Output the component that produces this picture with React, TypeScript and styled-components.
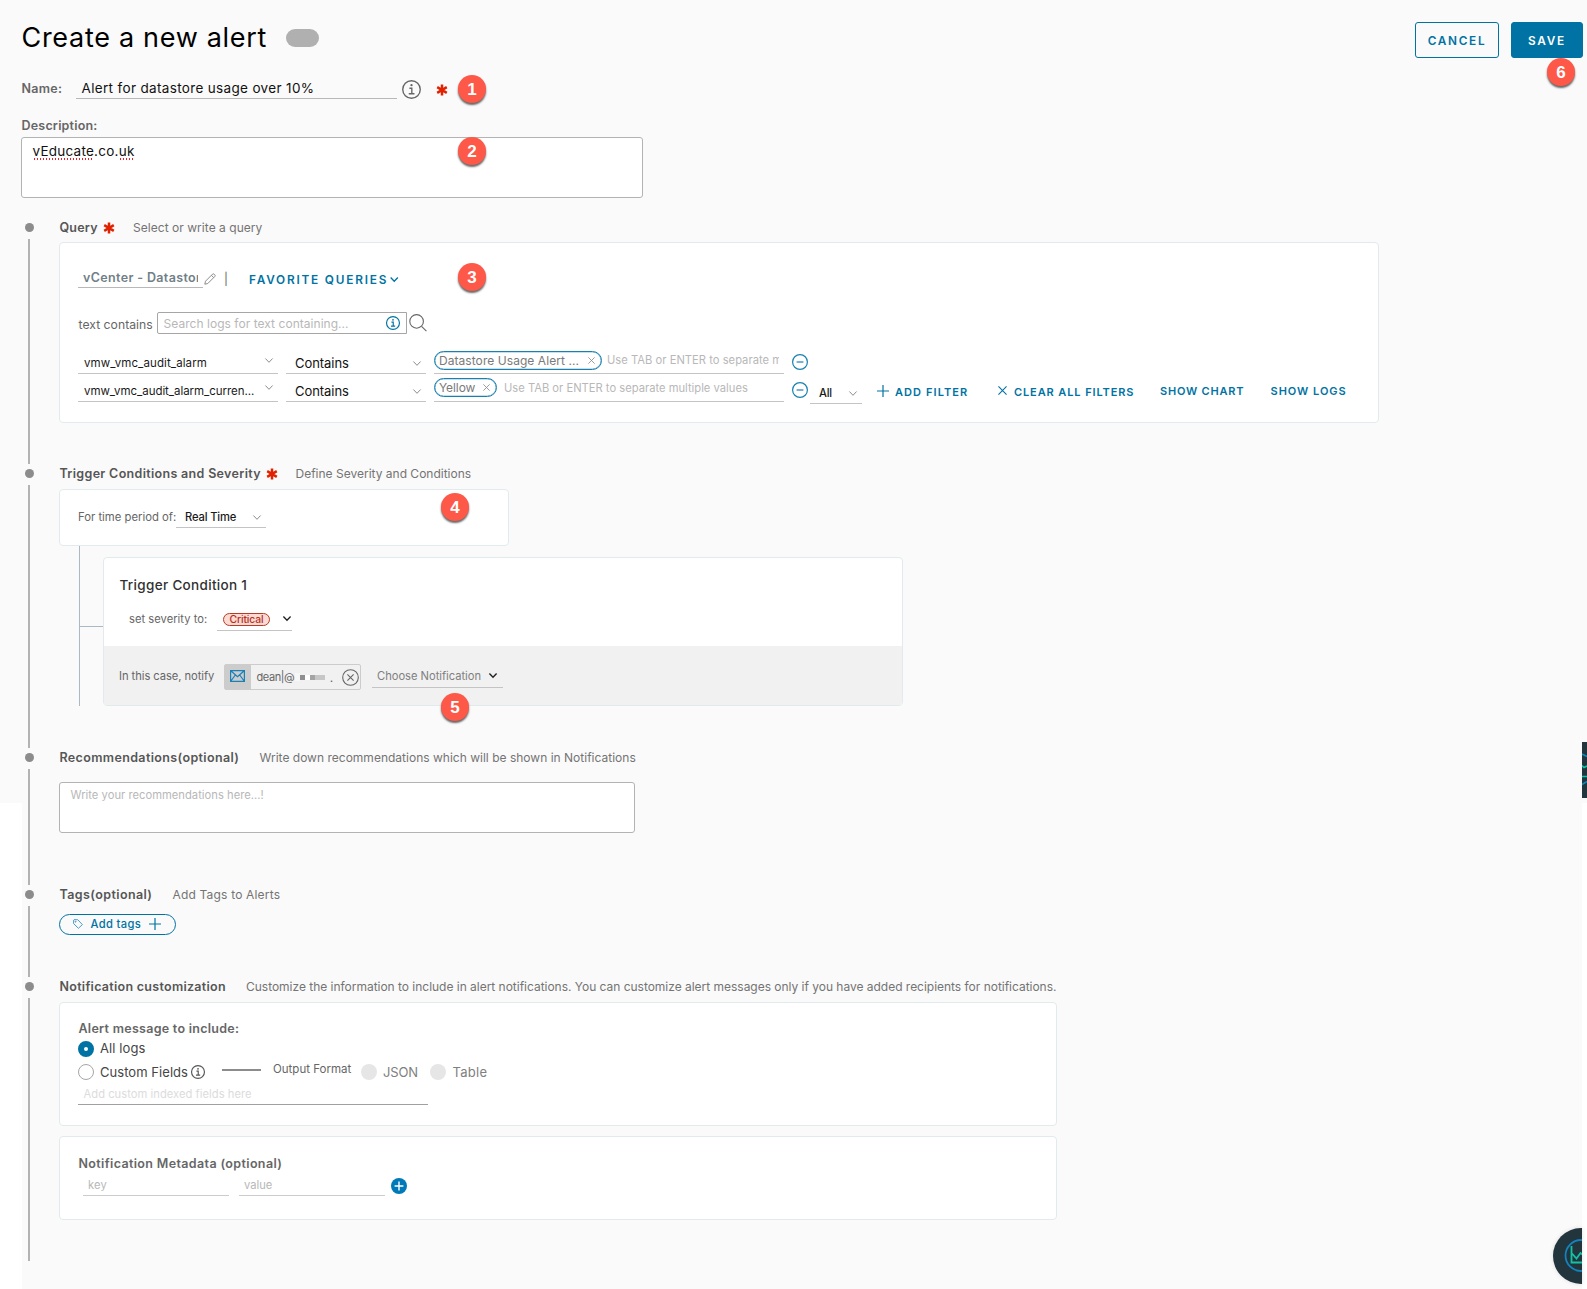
import React from 'react';
import styled, { createGlobalStyle } from 'styled-components';

const BLUE = '#0072a3';

const GlobalStyle = createGlobalStyle`
  * { box-sizing: border-box; }
  body { margin: 0; background: #fafafa; font-family: Inter, "Liberation Sans", sans-serif; }
  svg { display: block; flex: none; overflow: visible; }
`;

const Page = styled.main`
  position: relative;
  width: 1587px;
  height: 1289px;
  overflow: hidden;
  background: #fafafa;
  display: flex;
  flex-direction: column;
`;

const Gutter = styled.div<{ $side: 'left' | 'right'; $w: number }>`
  position: absolute;
  top: 803px;
  bottom: 0;
  ${(p) => p.$side}: 0;
  width: ${(p) => p.$w}px;
  background: #fff;
`;

interface TextProps {
  $size?: number;
  $weight?: number;
  $color?: string;
  $ls?: number;
  $w?: number;
  $ml?: number;
  $mt?: number;
}

const Text = styled.span<TextProps>`
  flex: none;
  font-size: ${(p) => p.$size ?? 12}px;
  font-weight: ${(p) => p.$weight ?? 400};
  color: ${(p) => p.$color ?? '#666'};
  letter-spacing: ${(p) => p.$ls ?? 0}px;
  line-height: 17px;
  white-space: nowrap;
  ${(p) => p.$w !== undefined && `width: ${p.$w}px;`}
  margin-left: ${(p) => p.$ml ?? 0}px;
  margin-top: ${(p) => p.$mt ?? 0}px;
`;

const Slot = styled.span<{ $ml?: number; $mt?: number }>`
  display: flex;
  flex: none;
  margin-left: ${(p) => p.$ml ?? 0}px;
  margin-top: ${(p) => p.$mt ?? 0}px;
`;

/* ---------- header ---------- */

const Header = styled.header`
  display: flex;
  align-items: center;
  height: 74px;
  padding: 0 4px 0 21.5px;
`;

const Title = styled.h1`
  margin: 2px 0 0;
  width: 264.5px;
  font-size: 27px;
  font-weight: 400;
  letter-spacing: 0.7px;
  line-height: 34px;
  color: #000;
  white-space: nowrap;
`;

const Toggle = styled.span`
  width: 33px;
  height: 18px;
  margin-top: 2px;
  border-radius: 9px;
  background: #b0b0b0;
`;

const Actions = styled.div`
  display: flex;
  gap: 12px;
  margin: 6px 0 0 auto;
`;

const Button = styled.button<{ $solid?: boolean }>`
  width: ${(p) => (p.$solid ? 72 : 84)}px;
  height: 36px;
  padding: 1px 0 0;
  border: 1px solid ${BLUE};
  border-radius: 3px;
  background: ${(p) => (p.$solid ? BLUE : 'transparent')};
  color: ${(p) => (p.$solid ? '#fff' : BLUE)};
  font: 600 11.8px Inter, sans-serif;
  letter-spacing: 1.7px;
`;

const FormRow = styled.div<{ $h: number; $mt?: number }>`
  display: flex;
  align-items: center;
  height: ${(p) => p.$h}px;
  margin-top: ${(p) => p.$mt ?? 0}px;
  padding-left: 21px;
`;

const Field = styled.div<{ $w: number; $h?: number; $pl?: number; $ml?: number; $mt?: number; $line?: string; $thick?: number }>`
  display: flex;
  align-items: center;
  flex: none;
  overflow: hidden;
  width: ${(p) => p.$w}px;
  height: ${(p) => p.$h ?? 21}px;
  padding-left: ${(p) => p.$pl ?? 5}px;
  margin-left: ${(p) => p.$ml ?? 0}px;
  margin-top: ${(p) => p.$mt ?? 0}px;
  border-bottom: ${(p) => p.$thick ?? 1}px solid ${(p) => p.$line ?? '#b8b8b8'};
`;

const TextArea = styled.div<{ $w: number; $h: number; $pt?: number }>`
  width: ${(p) => p.$w}px;
  height: ${(p) => p.$h}px;
  padding: ${(p) => p.$pt ?? 4}px 10.5px;
  border: 1px solid #b3b3b3;
  border-radius: 3px;
  background: #fff;
  display: flex;
  align-items: flex-start;
`;

const Misspelled = styled.span`
  padding-bottom: 1px;
  background: radial-gradient(circle, #e8202a 0.9px, transparent 1.1px) left bottom / 3px 2.4px repeat-x;
`;

/* ---------- timeline ---------- */

const Timeline = styled.div`
  display: flex;
  flex-direction: column;
  margin: 25px 0 0 21px;
`;

const Step = styled.section<{ $h: number }>`
  display: flex;
  height: ${(p) => p.$h}px;
`;

const Rail = styled.div`
  display: flex;
  flex-direction: column;
  align-items: center;
  width: 16px;
  margin-right: 22px;
  &::before {
    content: '';
    width: 9px;
    height: 9px;
    border-radius: 50%;
    background: #8c8c8c;
  }
  &::after {
    content: '';
    flex: 1;
    width: 2px;
    margin: 7px 0 5px;
    background: #b3b3b3;
  }
`;

const Body = styled.div``;

const Heading = styled.div<{ $gap: number }>`
  display: flex;
  align-items: center;
  height: 8px;
  margin-bottom: ${(p) => p.$gap}px;
`;

const Card = styled.div<{ $w: number; $h: number; $pt?: number; $mt?: number }>`
  width: ${(p) => p.$w}px;
  height: ${(p) => p.$h}px;
  padding: ${(p) => p.$pt ?? 0}px 0 0 18px;
  margin-top: ${(p) => p.$mt ?? 0}px;
  border: 1px solid #e1ebed;
  border-radius: 4px;
  background: #fff;
`;

const Row = styled.div<{ $h: number; $mt?: number; $top?: boolean }>`
  display: flex;
  align-items: ${(p) => (p.$top ? 'flex-start' : 'center')};
  height: ${(p) => p.$h}px;
  margin-top: ${(p) => p.$mt ?? 0}px;
`;

const SearchBox = styled.div`
  display: flex;
  align-items: center;
  width: 250px;
  height: 22px;
  padding-left: 5.5px;
  border: 1px solid #a6a6a6;
  border-radius: 2px 0 0 2px;
`;

const Tag = styled.span<{ $w: number }>`
  display: flex;
  align-items: center;
  flex: none;
  width: ${(p) => p.$w}px;
  height: 19px;
  padding-left: 4px;
  border: 1.4px solid #1a80b0;
  border-radius: 10px;
  box-shadow: inset 0 0 0 0.3px #1a80b0;
`;

const Tree = styled.div`
  display: flex;
  width: 824px;
  height: 160px;
  margin-left: 20px;
  padding-top: 11px;
  border-left: 1px solid #a9bac5;
`;

const Branch = styled.div`
  width: 23px;
  height: 1px;
  margin-top: 69px;
  background: #a9bac5;
`;

const Condition = styled.div`
  width: 800px;
  height: 149px;
  border: 1px solid #e1ebed;
  border-radius: 4px;
  background: #fff;
`;

const ConditionTop = styled.div`
  height: 88px;
  padding: 18px 0 0 15.5px;
`;

const ConditionBottom = styled.div`
  display: flex;
  align-items: center;
  height: 59px;
  padding-left: 15px;
  background: #f1f1f1;
`;

const Severity = styled.span`
  display: flex;
  align-items: center;
  justify-content: center;
  width: 47px;
  height: 13px;
  border: 1px solid #b93a26;
  border-radius: 7px;
  background: #fcdad4;
`;

const Recipient = styled.div`
  display: flex;
  align-items: center;
  width: 137px;
  height: 26px;
  margin-top: 3px;
  border: 1px solid #ccc;
  border-radius: 2px;
`;

const RecipientIcon = styled.span`
  display: flex;
  align-items: center;
  justify-content: center;
  width: 26px;
  height: 24px;
  padding: 0 2px 3px 0;
  background: #ccc;
`;

const Mosaic = styled.span`
  display: flex;
  align-items: center;
  height: 10px;
  margin-left: 1px;
`;

const Block = styled.i<{ $w: number; $c: string; $h?: number }>`
  width: ${(p) => p.$w}px;
  height: ${(p) => p.$h ?? 5}px;
  background: ${(p) => p.$c};
`;

const AddTags = styled.div`
  display: flex;
  align-items: center;
  width: 117px;
  height: 21px;
  padding: 0 0 1px 13px;
  border: 1px solid ${BLUE};
  border-radius: 11px;
`;

const Radio = styled.span<{ $state?: 'on' | 'off' | 'disabled'; $ml?: number }>`
  flex: none;
  width: 16px;
  height: 16px;
  margin-left: ${(p) => p.$ml ?? 0}px;
  border-radius: 50%;
  ${(p) =>
    p.$state === 'on'
      ? `border: 6px solid ${BLUE}; background: #fff;`
      : p.$state === 'disabled'
      ? 'background: #e6e6e6;'
      : 'border: 1px solid #a6a6a6; background: #fff;'}
`;

const Dash = styled.span`
  width: 39px;
  height: 1.5px;
  margin: -4px 0 0 17px;
  background: #8c8c8c;
`;

/* ---------- overlays ---------- */

const Badge = styled.span<{ $x: number; $y: number }>`
  position: absolute;
  left: ${(p) => p.$x - 14}px;
  top: ${(p) => p.$y - 14}px;
  width: 28px;
  height: 28px;
  border-radius: 50%;
  background: #fd5848;
  box-shadow: 0 2px 2px rgba(0, 0, 0, 0.6);
  color: #fff;
  font: bold 17px/29px "Liberation Sans", Arial, sans-serif;
  text-align: center;
`;

const SideTab = styled.div`
  position: absolute;
  left: 1582px;
  top: 742px;
  width: 5px;
  height: 56px;
  background: #22343c;
  overflow: hidden;
`;

const Assistant = styled.div`
  position: absolute;
  left: 1552.5px;
  top: 1228px;
  width: 29.5px;
  height: 56px;
  border-radius: 28px 0 0 28px;
  background: #22343c;
  overflow: hidden;
  box-shadow: 0 0 4px rgba(0, 0, 0, 0.12);
`;

/* ---------- icons ---------- */

const Asterisk = () => (
  <svg width="12" height="12" viewBox="-6 -6 12 12" stroke="#e12200" strokeWidth="2.5">
    <path d="M0-5.4V5.4M-4.8-2.8L4.8 2.8M4.8-2.8L-4.8 2.8" />
  </svg>
);

const Info = ({ size, color }: { size: number; color: string }) => (
  <svg width={size} height={size} viewBox="0 0 18 18" fill="none" stroke={color} strokeWidth={size > 15 ? 1.3 : 1.5}>
    <circle cx="9" cy="9" r="8.3" />
    <path d="M7 7.8h2.3v5M6.4 13h5.4" />
    <circle cx="9" cy="4.9" r="1.1" fill={color} stroke="none" />
  </svg>
);

const Caret = ({ color = '#8c8c8c', w = 8, sw = 1 }: { color?: string; w?: number; sw?: number }) => (
  <svg width={w} height="5" viewBox="0 0 8 5" fill="none" stroke={color} strokeWidth={sw}>
    <path d="M0.4 0.5L4 4.3L7.6 0.5" />
  </svg>
);

const Cross = ({ size, color = '#8c8c8c' }: { size: number; color?: string }) => (
  <svg width={size} height={size} viewBox="0 0 10 10" stroke={color} strokeWidth="1.2">
    <path d="M0.5 0.5L9.5 9.5M9.5 0.5L0.5 9.5" />
  </svg>
);

const Plus = ({ size }: { size: number }) => (
  <svg width={size} height={size} viewBox="0 0 12 12" stroke={BLUE} strokeWidth="1.2">
    <path d="M6 0V12M0 6H12" />
  </svg>
);

const Minus = () => (
  <svg width="16" height="16" viewBox="0 0 16 16" fill="none" stroke="#1a80b0" strokeWidth="1.2">
    <circle cx="8" cy="8" r="7.4" />
    <path d="M4.6 8h6.8" />
  </svg>
);

const Pencil = () => (
  <svg width="12" height="12" viewBox="0 0 12 12" fill="none" stroke="#8c8c8c" strokeWidth="1">
    <path d="M0.8 11.2L1.5 8.2L8.6 1.1Q9.3 0.4 10 1.1L10.9 2Q11.6 2.7 10.9 3.4L3.8 10.5ZM7.4 2.3L9.7 4.6" />
  </svg>
);

const Magnifier = () => (
  <svg width="18" height="18" viewBox="0 0 18 18" fill="none" stroke="#666" strokeWidth="1.1">
    <circle cx="7.6" cy="7.4" r="6.8" />
    <path d="M12.6 12.4L17.4 17.2" />
  </svg>
);

const Envelope = () => (
  <svg width="15" height="12" viewBox="0 0 15 12" fill="none" stroke="#1a80b8" strokeWidth="1.2">
    <path d="M0.6 0.6H14.4V11.4H0.6ZM0.8 0.8L7.5 6.8L14.2 0.8M0.9 11L5.3 5M14.1 11L9.7 5" />
  </svg>
);

const TagIcon = () => (
  <svg width="10" height="10" viewBox="0 0 10 10" fill="none" stroke="#3a91bb" strokeWidth="0.9">
    <path d="M0.6 1.1V4.6L5.4 9.3L9.4 5.6L4.7 0.7H1Z" />
    <circle cx="2.6" cy="2.7" r="0.5" />
  </svg>
);

/* ---------- page ---------- */

const HINT = '#b8b8b8';

const StepHeading = ({ title, ls, w, required, note, noteLs = 0.02, gap }: {
  title: string; ls: number; w: number; required?: boolean; note: string; noteLs?: number; gap: number;
}) => (
  <Heading $gap={gap}>
    <Text $size={12.5} $weight={600} $color="#565656" $ls={ls} $w={w} $ml={0.5}>{title}</Text>
    {required && <Slot $ml={4} $mt={2}><Asterisk /></Slot>}
    <Text $color="#747474" $ls={noteLs} $ml={required ? 18 : 20.5}>{note}</Text>
  </Heading>
);

const FilterRow = ({ name, nameLs, children }: { name: string; nameLs: number; children: React.ReactNode }) => (
  <Row $h={27.5} $top>
    <Field $w={200} $h={27} $pl={6} $line="#c4c4c4" $thick={1.5}>
      <Text $size={11.5} $color="#1a1a1a" $ls={nameLs} $w={180} $mt={7}>{name}</Text>
      <Slot $ml={1}><Caret /></Slot>
    </Field>
    <Field $w={140} $h={27} $pl={9} $ml={8} $line="#c4c4c4" $thick={1.5}>
      <Text $size={13} $color="#111" $ls={-0.05} $w={117.5} $mt={7}>Contains</Text>
      <Slot $mt={7}><Caret /></Slot>
    </Field>
    {children}
  </Row>
);

export default function App() {
  return (
    <>
      <GlobalStyle />
      <Page>
        <Gutter $side="left" $w={22} />
        <Gutter $side="right" $w={5} />

        <Header>
          <Title>Create a new alert</Title>
          <Toggle />
          <Actions>
            <Button>CANCEL</Button>
            <Button $solid>SAVE</Button>
          </Actions>
        </Header>

        <FormRow $h={30}>
          <Text $size={12.5} $weight={600} $ls={0.3} $w={54.5} $ml={0.5} $mt={-2}>Name:</Text>
          <Field $w={321} $h={20} $pl={5.5}>
            <Text $size={13.5} $color="#111" $ls={0.34}>Alert for datastore usage over 10%</Text>
          </Field>
          <Slot $ml={4.5}><Info size={19} color="#666" /></Slot>
          <Slot $ml={15.5} $mt={1}><Asterisk /></Slot>
        </FormRow>

        <FormRow $h={17} $mt={13}>
          <Text $size={12.5} $weight={600} $ls={0.2} $ml={0.5}>Description:</Text>
        </FormRow>
        <FormRow $h={61} $mt={3}>
          <TextArea $w={622} $h={61} $pt={5}>
            <Text $size={13.5} $color="#111" $ls={0.25}>
              <Misspelled>vEducate</Misspelled>.co.<Misspelled>uk</Misspelled>
            </Text>
          </TextArea>
        </FormRow>

        <Timeline>
          <Step $h={246}>
            <Rail />
            <Body>
              <StepHeading title="Query" ls={0.2} w={39.5} required note="Select or write a query" noteLs={0.04} gap={11} />
              <Card $w={1320} $h={181} $pt={24}>
                <Row $h={21}>
                  <Field $w={125} $pl={5}>
                    <Field as="span" $w={115} $h={20} $pl={0} $line="transparent">
                      <Text $size={12.5} $weight={600} $color="#717f87" $ls={0.36} $mt={1.5}>vCenter - Datastore</Text>
                    </Field>
                  </Field>
                  <Slot $ml={1} $mt={2}><Pencil /></Slot>
                  <Text $size={12} $ml={8} $w={25} $mt={1}>|</Text>
                  <Text $size={11.8} $weight={600} $color={BLUE} $ls={1.8} $w={140.5} $mt={5}>FAVORITE QUERIES</Text>
                  <Slot $mt={3}><Caret color={BLUE} w={8.5} sw={1.3} /></Slot>
                </Row>
                <Row $h={22} $mt={24}>
                  <Text $size={12.2} $ls={0.02} $w={78.5} $ml={0.5} $mt={3}>text contains</Text>
                  <SearchBox>
                    <Text $size={12} $color={HINT} $ls={0.04} $w={222.5}>Search logs for text containing...</Text>
                    <Info size={14} color={BLUE} />
                  </SearchBox>
                  <Slot $ml={2}><Magnifier /></Slot>
                </Row>
                <Row $h={13} />
                <FilterRow name="vmw_vmc_audit_alarm" nameLs={0.1}>
                  <Field $w={350} $h={27} $pl={0} $ml={8} $line="#c4c4c4" $thick={1.5}>
                    <Tag $w={168}>
                      <Text $color="#7a7a7a" $w={148.5} $ls={0.06}>Datastore Usage Alert ...</Text>
                      <Cross size={7} />
                    </Tag>
                    <Field as="span" $w={172} $h={20} $pl={0} $ml={5} $line="transparent">
                      <Text $size={11.2} $color={HINT} $ls={0.02} $mt={2}>Use TAB or ENTER to separate multiple values</Text>
                    </Field>
                  </Field>
                  <Slot $ml={8} $mt={7}><Minus /></Slot>
                </FilterRow>
                <FilterRow name="vmw_vmc_audit_alarm_curren..." nameLs={-0.05}>
                  <Field $w={350} $h={27} $pl={0} $ml={8} $line="#c4c4c4" $thick={1.5}>
                    <Tag $w={63}>
                      <Text $color="#7a7a7a" $w={44} $ls={-0.1}>Yellow</Text>
                      <Cross size={7} />
                    </Tag>
                    <Text $size={11.2} $color={HINT} $ml={7} $mt={1}>Use TAB or ENTER to separate multiple values</Text>
                  </Field>
                  <Slot $ml={8} $mt={7}><Minus /></Slot>
                  <Field $w={52} $h={25} $pl={9} $ml={2} $mt={4} $line="#c4c4c4" $thick={1.5}>
                    <Text $size={11.2} $weight={500} $color="#1a1a1a" $ls={-0.2} $w={30} $mt={6}>All</Text>
                    <Slot $mt={5}><Caret /></Slot>
                  </Field>
                  <Slot $ml={15} $mt={10.5}><Plus size={12} /></Slot>
                  <Text $size={11} $weight={600} $color={BLUE} $ls={1.08} $w={102.5} $ml={6} $mt={9}>ADD FILTER</Text>
                  <Slot $mt={11.5}><Cross size={9} color={BLUE} /></Slot>
                  <Text $size={11} $weight={600} $color={BLUE} $ls={0.9} $w={146} $ml={7.5} $mt={9}>CLEAR ALL FILTERS</Text>
                  <Text $size={11} $weight={600} $color={BLUE} $ls={0.79} $w={110.5} $mt={8}>SHOW CHART</Text>
                  <Text $size={11} $weight={600} $color={BLUE} $ls={0.98} $mt={8}>SHOW LOGS</Text>
                </FilterRow>
              </Card>
            </Body>
          </Step>

          <Step $h={284}>
            <Rail />
            <Body>
              <StepHeading title="Trigger Conditions and Severity" ls={0.32} w={202} required note="Define Severity and Conditions" noteLs={0} gap={12} />
              <Card $w={450} $h={57} $pt={17}>
                <Row $h={21}>
                  <Text $size={11.3} $w={98}>For time period of:</Text>
                  <Field $w={90} $h={21} $pl={9} $line="#c4c4c4" $thick={1.5}>
                    <Text $size={11.2} $weight={500} $color="#1a1a1a" $ls={-0.15} $w={68}>Real Time</Text>
                    <Caret />
                  </Field>
                </Row>
              </Card>
              <Tree>
                <Branch />
                <Condition>
                  <ConditionTop>
                    <Row $h={18}>
                      <Text $size={13.5} $weight={500} $color="#313131" $ls={0.32}>Trigger Condition 1</Text>
                    </Row>
                    <Row $h={23} $mt={14}>
                      <Text $size={11.2} $ml={9.5} $w={88} $ls={0.02}>set severity to:</Text>
                      <Field $w={75} $h={23} $pl={6} $line="#c4c4c4" $thick={1.5}>
                        <Severity><Text $size={10.3} $weight={500} $color="#b5301c" $ls={-0.1}>Critical</Text></Severity>
                        <Slot $ml={12.5} $mt={-2}><Caret color="#222" sw={1.3} /></Slot>
                      </Field>
                    </Row>
                  </ConditionTop>
                  <ConditionBottom>
                    <Text $size={11.2} $ls={-0.06} $w={105} $mt={1}>In this case, notify</Text>
                    <Recipient>
                      <RecipientIcon><Envelope /></RecipientIcon>
                      <Text $size={11} $ls={-0.4} $ml={5.5}>dean|@</Text>
                      <Mosaic>
                        <Block $w={5} $h={8} $c="#f7f7f7" />
                        <Block $w={5} $c="#8f8f8f" />
                        <Block $w={5} $c="#fff" />
                        <Block $w={5} $c="#a3a3a3" />
                        <Block $w={10} $c="#c6c6c6" />
                      </Mosaic>
                      <Text $size={12} $w={12.5} $ml={4.5}>.</Text>
                      <svg width="17" height="17" viewBox="0 0 17 17" fill="none" stroke="#666" strokeWidth="1.1">
                        <circle cx="8.5" cy="8.5" r="7.8" />
                        <path d="M5.4 5.4L11.6 11.6M11.6 5.4L5.4 11.6" />
                      </svg>
                    </Recipient>
                    <Field $w={131} $h={22} $ml={10.5} $mt={2} $pl={5.5} $line="#c4c4c4" $thick={1.5}>
                      <Text $size={11.2} $color="#808080" $w={112} $ls={-0.03} $mt={1}>Choose Notification</Text>
                      <Slot $mt={-2}><Caret color="#222" sw={1.4} /></Slot>
                    </Field>
                  </ConditionBottom>
                </Condition>
              </Tree>
            </Body>
          </Step>

          <Step $h={137}>
            <Rail />
            <Body>
              <StepHeading title="Recommendations(optional)" ls={0.36} w={179.5} note="Write down recommendations which will be shown in Notifications" noteLs={0.01} gap={21} />
              <TextArea $w={576} $h={51}>
                <Text $size={11.2} $color={HINT} $ls={0.02}>Write your recommendations here...!</Text>
              </TextArea>
            </Body>
          </Step>

          <Step $h={92}>
            <Rail />
            <Body>
              <StepHeading title="Tags(optional)" ls={0.39} w={92.5} note="Add Tags to Alerts" noteLs={0.18} gap={16} />
              <AddTags>
                <TagIcon />
                <Text $size={11.2} $weight={500} $color={BLUE} $ls={0.35} $w={58.5} $ml={7.5}>Add tags</Text>
                <Plus size={12} />
              </AddTags>
            </Body>
          </Step>

          <Step $h={284}>
            <Rail />
            <Body>
              <StepHeading
                title="Notification customization"
                ls={0.28}
                w={166}
                note="Customize the information to include in alert notifications. You can customize alert messages only if you have added recipients for notifications."
                noteLs={-0.02}
                gap={12}
              />
              <Card $w={998} $h={124} $pt={17}>
                <Row $h={17}>
                  <Text $size={12.5} $weight={600} $ls={0.28} $ml={0.5}>Alert message to include:</Text>
                </Row>
                <Row $h={23}>
                  <Radio $state="on" />
                  <Text $size={13} $color="#454545" $ls={0.11} $ml={6}>All logs</Text>
                </Row>
                <Row $h={24}>
                  <Radio $state="off" />
                  <Text $size={13} $color="#454545" $ls={0.05} $w={91} $ml={6} $mt={1}>Custom Fields</Text>
                  <Slot $mt={-1}><Info size={14} color="#565656" /></Slot>
                  <Dash />
                  <Text $size={11.5} $w={88} $ml={12} $mt={-5}>Output Format</Text>
                  <Radio $state="disabled" />
                  <Text $size={13} $color="#808080" $ls={-0.17} $w={47} $ml={6}>JSON</Text>
                  <Radio $state="disabled" />
                  <Text $size={13} $color="#808080" $ls={0.27} $ml={6.5}>Table</Text>
                </Row>
                <Field $w={350} $line="#a0a0a0" $thick={1.5}>
                  <Text $size={11.2} $color="#dcdcdc" $ls={0.03} $ml={0.5} $mt={1}>Add custom indexed fields here</Text>
                </Field>
              </Card>
              <Card $w={998} $h={84} $pt={18} $mt={10}>
                <Row $h={17}>
                  <Text $size={12.5} $weight={600} $ls={0.36} $ml={0.5}>Notification Metadata (optional)</Text>
                </Row>
                <Row $h={21} $mt={3}>
                  <Field $w={146} $ml={5} $line="#ccc">
                    <Text $size={11.2} $color={HINT} $ls={0.2} $mt={1}>key</Text>
                  </Field>
                  <Field $w={146} $ml={10} $line="#ccc">
                    <Text $size={11.2} $color={HINT} $mt={1}>value</Text>
                  </Field>
                  <Slot $ml={6} $mt={1}>
                    <svg width="16" height="16" viewBox="0 0 16 16">
                      <circle cx="8" cy="8" r="8" fill="#0079b8" />
                      <path d="M8 3.6V12.4M3.6 8H12.4" stroke="#fff" strokeWidth="1.4" />
                    </svg>
                  </Slot>
                </Row>
              </Card>
            </Body>
          </Step>
        </Timeline>

        <SideTab>
          <svg width="5" height="56" viewBox="0 0 5 56" fill="none" strokeWidth="1.6">
            <path d="M0 12L5 14.5M0 42.5L5 39.5" stroke="#0f86bd" />
            <path d="M0 23.5L2 25.5L5 24M0 34.5H5" stroke="#12c2a5" />
          </svg>
        </SideTab>
        <Assistant>
          <svg width="30" height="56" viewBox="0 0 30 56" fill="none">
            <circle cx="28" cy="27.5" r="15.5" stroke="#1382bd" strokeWidth="1.8" />
            <path d="M18.5 18V34.5H30M19 25.5L23.5 30.5L27.5 25L30 27" stroke="#12c2a5" strokeWidth="1.8" />
          </svg>
        </Assistant>

        <Badge $x={472} $y={88.5}>1</Badge>
        <Badge $x={472} $y={151}>2</Badge>
        <Badge $x={472} $y={277}>3</Badge>
        <Badge $x={455} $y={506.5}>4</Badge>
        <Badge $x={455} $y={707}>5</Badge>
        <Badge $x={1561} $y={72}>6</Badge>
      </Page>
    </>
  );
}
